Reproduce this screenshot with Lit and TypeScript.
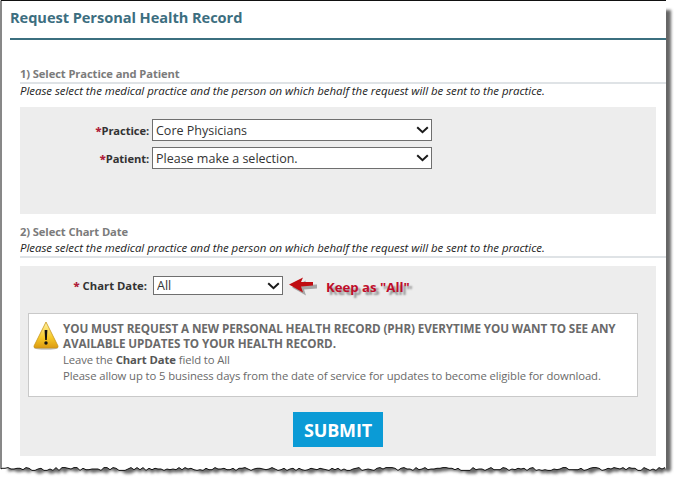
import { LitElement, html, css, svg } from "lit";
import { customElement } from "lit/decorators.js";

function jag(fromX: number, toX: number, base: number): string {
  const pts: string[] = [];
  let seed = 17;
  for (let x = fromX; x <= toX; x += 3) {
    seed = (seed * 137 + 71) % 251;
    pts.push(`${x},${(base + ((seed % 5) - 2) * 0.7).toFixed(1)}`);
  }
  return pts.reverse().join(" ");
}

const chevron = html`<svg class="chev" width="13" height="8" viewBox="0 0 13 8"><path d="M1.2 1.2 L6.5 6.2 L11.8 1.2" fill="none" stroke="#1a1a1a" stroke-width="2"/></svg>`;

@customElement("app-root")
export class AppRoot extends LitElement {
  static styles = css`
    :host { display: block; position: relative; width: 674px; height: 478px; overflow: hidden; background: #fff;
      font-family: "Open Sans", "Noto Sans", sans-serif; color: #333; }
    .edge { position: absolute; left: 0; top: 0; }
    .sheet { position: relative; width: 666px; height: 468px; box-sizing: border-box; padding: 0 0 0 10px; }
    h1 { margin: 0; height: 38px; box-sizing: border-box; padding-top: 7px; font-size: 14.6px; line-height: 20px; font-weight: 700; color: #3c6e80; letter-spacing: -0.05px; }
    .rule { height: 2px; background: #3b6f7f; }
    .section { margin-left: 10px; }
    h2 { margin: 0; font-size: 11.2px; line-height: 16px; font-weight: 700; color: #7b7b7b; letter-spacing: -0.1px; }
    .s1 { padding-top: 26px; }
    .s2 { padding-top: 10px; }
    .line { height: 2px; background: #dfe3e6; }
    .hint { font-size: 11.45px; line-height: 15px; font-style: italic; color: #222; white-space: nowrap; letter-spacing: -0.03px; }
    .s1 .hint { height: 14px; line-height: 14px; }
    .s2 .hint { height: 16px; line-height: 16px; }
    .panel { margin-right: 10px; background: #ededed; }
    .p1 { height: 107px; margin-top: 9px; box-sizing: border-box; padding-top: 12px; display: grid; grid-template-columns: 129px 280px; column-gap: 3px; row-gap: 6px; grid-auto-rows: 22px; align-items: center; }
    .p2 { height: 190px; margin-top: 8px; box-sizing: border-box; padding: 10px 18px 0 8px; }
    label { font-size: 11.2px; font-weight: 700; color: #333; text-align: right; white-space: nowrap; letter-spacing: -0.1px; }
    label b { color: #b0203a; }
    .sel { position: relative; display: block; height: 100%; }
    select { appearance: none; -webkit-appearance: none; display: block; width: 100%; height: 100%; box-sizing: border-box; border: 1px solid #6f6f6f; border-radius: 0; background: #fff; padding: 0 0 0 3px; margin: 0; font: 12.5px "Open Sans", sans-serif; color: #333; }
    .chev { position: absolute; right: 3px; top: 7px; }
    .row { display: flex; align-items: center; height: 19px; }
    .row label { width: 119px; font-size: 11.3px; letter-spacing: 0; }
    .row .sel { width: 130px; margin-left: 6px; }
    .row .chev { top: 6px; }
    .arrow { margin-left: 6px; }
    .keep { margin-left: 9px; font-size: 13.2px; font-weight: 700; color: #c00d2a; text-shadow: 3px 3px 2px rgba(0,0,0,.4); position: relative; top: 1px; }
    .alert { margin-top: 18px; height: 84px; box-sizing: border-box; border: 1px solid #c9c9c9; background: #fff; padding: 7px 8px 0 4px; display: flex; gap: 4px; font-size: 11.3px; line-height: 16px; color: #6a6a6a; letter-spacing: -0.1px; }
    .alert svg { flex: none; }
    .alert strong { color: #555; }
    .alert div div { white-space: nowrap; }
    .alert .head { font-weight: 700; white-space: normal; font-size: 11.7px; line-height: 15px; margin-bottom: 1px; }
    .actions { display: flex; justify-content: center; margin: 15px 0 0 0; padding-left: 10px; }
    button { width: 90px; height: 35px; border: 0; border-radius: 0; background: #0b9bd6; color: #fff; font: 700 18px "Open Sans", sans-serif; padding: 0; letter-spacing: -0.2px; }
  `;

  render() {
    const jagged = jag(2, 666, 469);
    return html`
      <svg class="edge" width="674" height="478" viewBox="0 0 674 478">
        <defs><filter id="b" x="-5%" y="-5%" width="110%" height="110%"><feGaussianBlur stdDeviation="1.5"/></filter></defs>
        ${svg`<polygon points="8,10 671,10 671,472 ${jag(8, 671, 472)}" fill="#666" filter="url(#b)"/>
        <polygon points="0,0 666,0 666,469 ${jagged}" fill="#fff"/>
        <polyline points="666,0.5 1,0.5 1,469 ${jagged.split(" ").reverse().join(" ")}" fill="none" stroke="#111" stroke-width="1"/>`}
      </svg>
      <div class="sheet">
        <h1>Request Personal Health Record</h1>
        <div class="rule"></div>
        <div class="section s1">
          <h2>1) Select Practice and Patient</h2>
          <div class="line"></div>
          <div class="hint">Please select the medical practice and the person on which behalf the request will be sent to the practice.</div>
          <div class="panel p1">
            <label><b>*</b>Practice:</label>
            <span class="sel"><select><option>Core Physicians</option></select>${chevron}</span>
            <label><b>*</b>Patient:</label>
            <span class="sel"><select><option>Please make a selection.</option></select>${chevron}</span>
          </div>
        </div>
        <div class="section s2">
          <h2>2) Select Chart Date</h2>
          <div class="hint">Please select the medical practice and the person on which behalf the request will be sent to the practice.</div>
          <div class="line"></div>
          <div class="panel p2">
            <div class="row">
              <label><b>*</b> Chart Date:</label>
              <span class="sel"><select><option>All</option></select>${chevron}</span>
              <svg class="arrow" width="28" height="20" viewBox="0 0 28 20">
                <path d="M0 9 L14 2 L12 6.5 L25 6 L25 10 L12 11 L14 17 Z" fill="#000" opacity=".3" transform="translate(3 2.5)"/>
                <path d="M0 8.5 L14 1.5 L12 6 L24 6 L24 9.5 L12 10.5 L14 16.5 Z" fill="#c00d12"/>
              </svg>
              <span class="keep">Keep as "All"</span>
            </div>
            <div class="alert">
              <svg width="26" height="30" viewBox="0 0 26 30">
                <defs><linearGradient id="y" x1="0" y1="0" x2="0" y2="1"><stop offset="0" stop-color="#fff3a6"/><stop offset=".6" stop-color="#f6c928"/><stop offset="1" stop-color="#dc9a10"/></linearGradient></defs>
                <ellipse cx="13" cy="27" rx="12" ry="1.8" fill="#aaa" opacity=".7"/>
                <path d="M13 1 L25 25 Q25.5 27 23 27 L3 27 Q.5 27 1 25 Z" fill="url(#y)" stroke="#c8961c" stroke-width=".8"/>
                <path d="M11.6 9 H14.4 L13.8 19 H12.2 Z" fill="#111"/>
                <circle cx="13" cy="22" r="1.7" fill="#111"/>
              </svg>
              <div>
                <div class="head">YOU MUST REQUEST A NEW PERSONAL HEALTH RECORD (PHR) EVERYTIME YOU WANT TO SEE ANY AVAILABLE UPDATES TO YOUR HEALTH RECORD.</div>
                <div>Leave the <strong>Chart Date</strong> field to All</div>
                <div>Please allow up to 5 business days from the date of service for updates to become eligible for download.</div>
              </div>
            </div>
            <div class="actions"><button>SUBMIT</button></div>
          </div>
        </div>
      </div>
    `;
  }
}
